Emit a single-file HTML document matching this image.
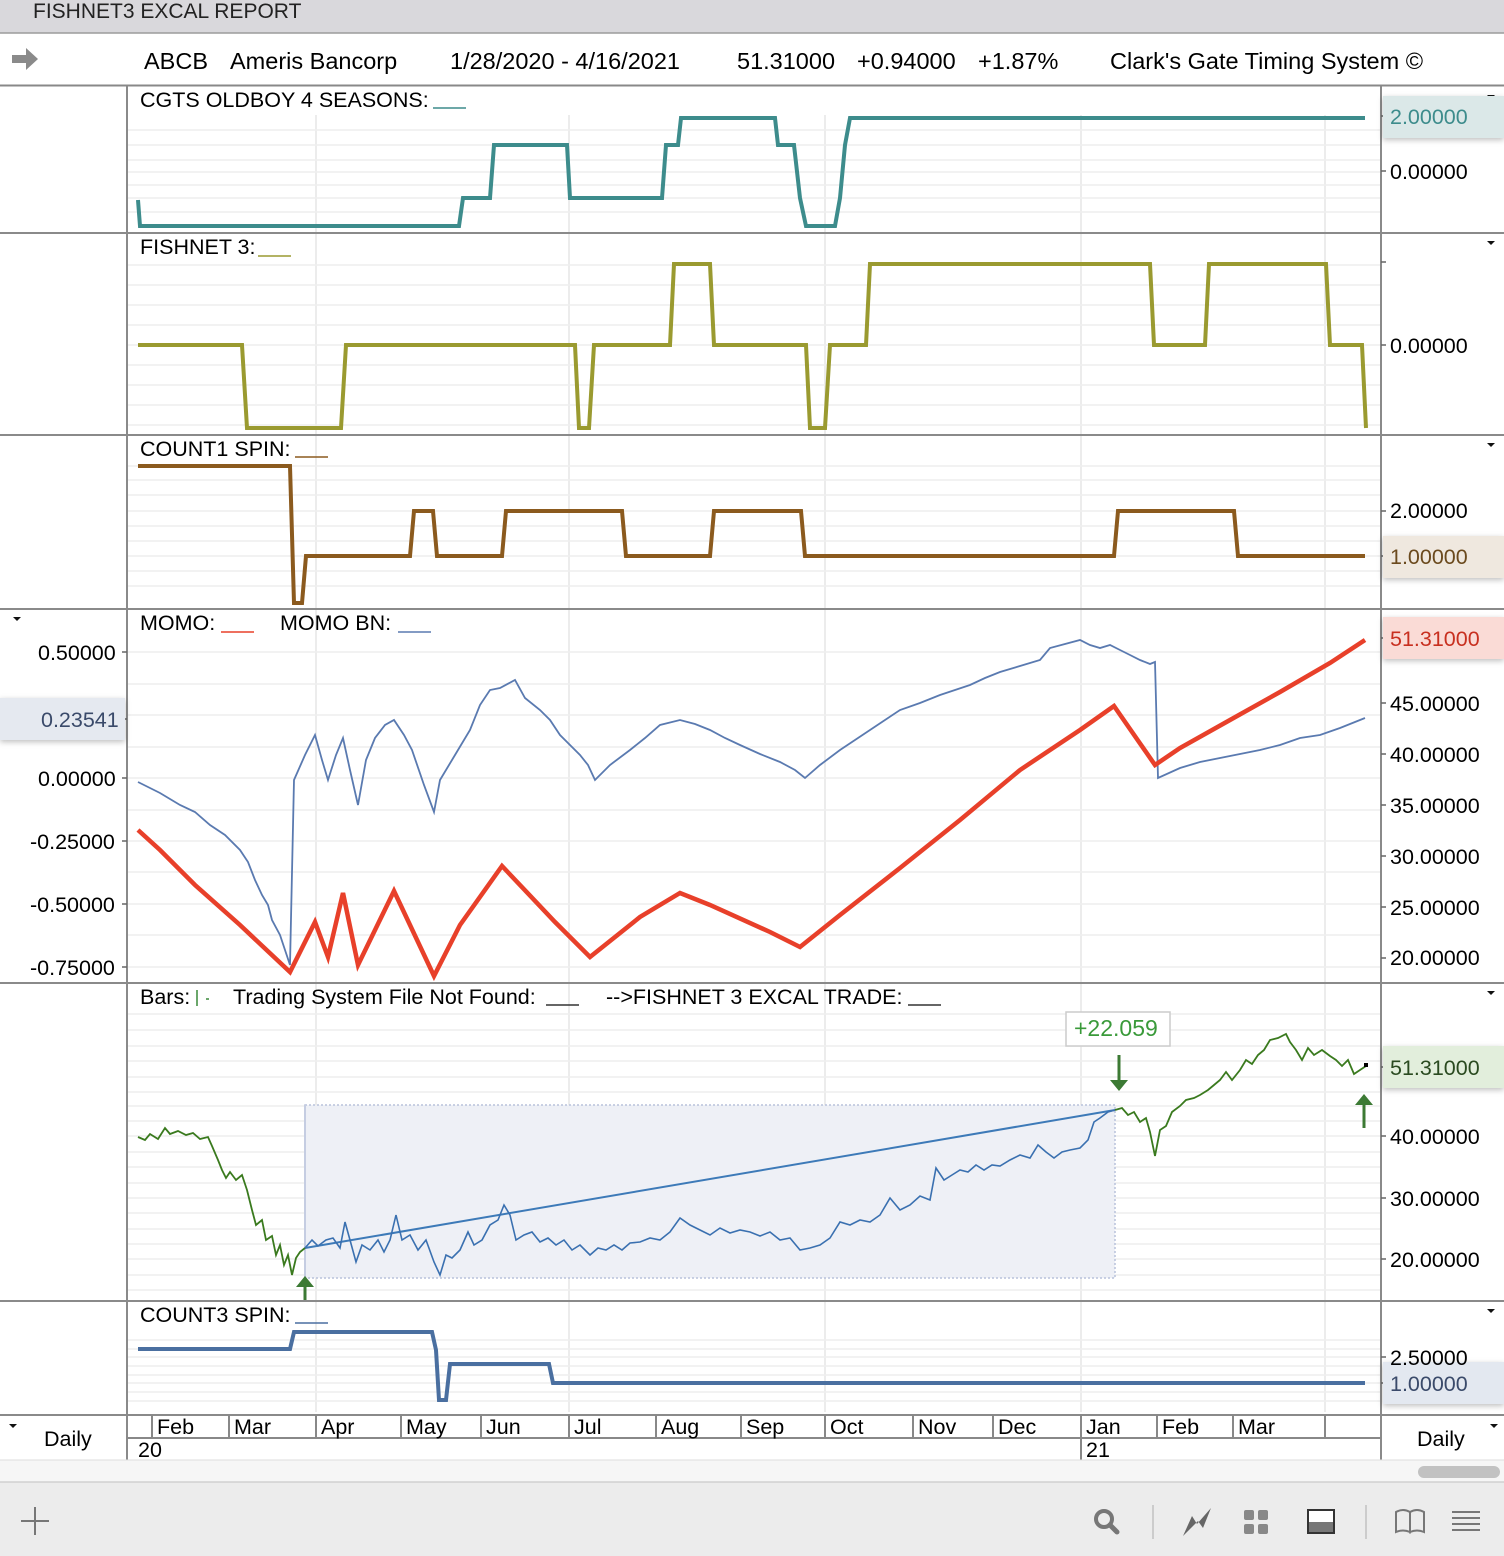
<!DOCTYPE html>
<html><head><meta charset="utf-8"><style>
html,body{margin:0;padding:0;background:#fff;}
svg{display:block;font-family:"Liberation Sans",Arial,sans-serif;}
</style></head><body>
<svg width="1504" height="1556" viewBox="0 0 1504 1556" xmlns="http://www.w3.org/2000/svg">
<defs><filter id="sh" x="-10%" y="-30%" width="120%" height="160%"><feDropShadow dx="0" dy="2" stdDeviation="3" flood-color="#000" flood-opacity="0.25"/></filter></defs>
<rect x="0" y="0" width="1504" height="33" fill="#d9d8dc"/>
<line x1="0" y1="33" x2="1504" y2="33" stroke="#9c9c9c" stroke-width="1.5"/>
<text x="33" y="18" font-size="21" fill="#222">FISHNET3 EXCAL REPORT</text>
<path d="M12 55h14v-7l12 11-12 11v-7H12z" fill="#8a8a8a"/>
<g font-size="23.5" fill="#000">
<text x="144" y="69">ABCB</text><text x="230" y="69">Ameris Bancorp</text>
<text x="450" y="69">1/28/2020 - 4/16/2021</text>
<text x="737" y="69">51.31000</text><text x="857" y="69">+0.94000</text><text x="978" y="69">+1.87%</text>
<text x="1110" y="69">Clark's Gate Timing System ©</text></g>
<line x1="0" y1="85.5" x2="1504" y2="85.5" stroke="#888" stroke-width="2"/>

<g stroke="#ececec" stroke-width="2">
<path d="M316 115V1412M569 115V1412M825 115V1412M1081 115V1412M1325 115V1412"/>
</g>
<g stroke="#eeeeee" stroke-width="1.5">
<path d="M128 130H1381M128 145H1381M128 160H1381M128 172H1381M128 185H1381M128 198H1381M128 212H1381"/>
<path d="M128 265H1381M128 285H1381M128 305H1381M128 325H1381M128 345H1381M128 365H1381M128 385H1381M128 405H1381M128 425H1381"/>
<path d="M128 466H1381M128 480H1381M128 495H1381M128 511H1381M128 526H1381M128 541H1381M128 556H1381M128 571H1381M128 586H1381"/>
<path d="M128 652H1381M128 684H1381M128 715H1381M128 747H1381M128 778H1381M128 810H1381M128 841H1381M128 872H1381M128 904H1381M128 935H1381M128 967H1381"/>
<path d="M128 1014H1381M128 1030H1381M128 1046H1381M128 1061H1381M128 1077H1381M128 1092H1381M128 1106H1381M128 1121H1381M128 1136H1381M128 1152H1381M128 1167H1381M128 1183H1381M128 1198H1381M128 1213H1381M128 1229H1381M128 1244H1381M128 1259H1381M128 1275H1381M128 1290H1381"/>
<path d="M128 1340H1381M128 1349H1381M128 1357H1381M128 1366H1381M128 1375H1381M128 1383H1381M128 1392H1381M128 1401H1381"/>
</g>

<g stroke="#8a8a8a" stroke-width="2">
<path d="M0 233H1504M0 435H1504M0 609H1504M0 983H1504M0 1301H1504M0 1415H1504"/>
<path d="M127 86V1460M1381 86V1460"/>
</g>

<g font-size="21.5" fill="#000">
<text x="140" y="107">CGTS OLDBOY 4 SEASONS:</text>
<text x="140" y="254">FISHNET 3:</text>
<text x="140" y="456">COUNT1 SPIN:</text>
<text x="140" y="630">MOMO:</text><text x="280" y="630">MOMO BN:</text>
<text x="140" y="1004">Bars:</text><text x="233" y="1004">Trading System File Not Found:</text><text x="606" y="1004">--&gt;FISHNET 3 EXCAL TRADE:</text>
<text x="140" y="1322">COUNT3 SPIN:</text>
</g>
<g stroke-width="1.5">
<path d="M433 108h33" stroke="#3d8c8c"/><path d="M258 256h33" stroke="#9a9a30"/>
<path d="M295 457h33" stroke="#8b5a1e"/><path d="M221 632h33" stroke="#e8402a"/>
<path d="M398 632h33" stroke="#5a7ab0"/><path d="M546 1005h33" stroke="#333"/><path d="M908 1005h33" stroke="#333"/>
<path d="M295 1323h33" stroke="#4a6fa0"/><path d="M197 990v16M206 999h3" stroke="#3a8a3a"/>
</g>

<g fill="#111">
<path d="M1487 95h8l-4 4z M1487 241h8l-4 4z M1487 443h8l-4 4z M1487 617h8l-4 4z M13 617h8l-4 4z M1487 991h8l-4 4z M1487 1309h8l-4 4z M9 1424h8l-4 4z M1490 1424h8l-4 4z"/>
</g>

<polyline fill="none" stroke="#3d8c8c" stroke-width="4" points="138,200 140,226 459,226 463,198 490,198 494,145 567,145 570,198 662,198 666,145 678,145 681,118 775,118 778,145 794,145 800,198 806,226 835,226 840,198 845,145 850,118 1365,118"/>
<polyline fill="none" stroke="#9a9a30" stroke-width="4" points="138,345 242,345 247,428 341,428 346,345 575,345 579,428 589,428 594,345 670,345 674,264 710,264 714,345 806,345 810,428 825,428 830,345 866,345 870,264 1150,264 1154,345 1205,345 1209,264 1326,264 1330,345 1362,345 1366,428"/>
<polyline fill="none" stroke="#8b5a1e" stroke-width="4" points="138,466 290,466 294,603 302,603 306,556 410,556 414,511 433,511 437,556 502,556 506,511 622,511 626,556 710,556 714,511 801,511 805,556 1114,556 1118,511 1234,511 1238,556 1365,556"/>
<polyline fill="none" stroke="#5a7ab0" stroke-width="1.8" points="138,782 160,793 180,805 195,812 210,825 225,835 240,850 248,862 255,880 262,895 268,905 272,920 280,935 285,950 290,965 294,780 305,755 315,735 322,760 328,780 336,755 343,738 350,770 358,805 366,760 375,738 385,725 394,720 404,735 412,750 424,785 434,812 440,780 455,755 470,730 480,705 490,690 500,688 515,680 525,698 540,710 550,720 560,735 570,745 580,755 588,765 595,780 610,765 630,750 645,738 660,725 680,720 695,724 710,730 725,738 740,745 760,754 780,762 795,770 805,778 820,765 840,750 855,740 870,730 885,720 900,710 920,703 940,695 955,690 970,685 985,678 1000,672 1020,666 1040,660 1050,648 1065,644 1080,640 1090,645 1100,648 1110,645 1120,650 1130,655 1140,660 1150,664 1155,662 1158,778 1180,768 1200,762 1230,756 1260,750 1280,745 1300,738 1320,735 1340,728 1355,722 1365,718"/>
<polyline fill="none" stroke="#e8402a" stroke-width="4.5" points="138,830 160,850 195,885 240,925 290,972 315,922 328,957 343,893 358,965 394,891 434,976 460,925 502,866 555,922 590,957 640,917 680,893 710,905 770,932 800,947 840,915 900,868 960,820 1020,770 1080,730 1114,706 1155,765 1180,748 1230,720 1280,692 1330,663 1365,640"/>

<rect x="305" y="1105" width="810" height="173" fill="#eef0f6" stroke="#b8c2dc" stroke-width="1.5" stroke-dasharray="2,2"/>
<line x1="305" y1="1105" x2="305" y2="1278" stroke="#c5cde2" stroke-width="2"/>
<polyline fill="none" stroke="#3d7ab8" stroke-width="2" points="305,1248 1115,1110"/>
<polyline fill="none" stroke="#3a7a1e" stroke-width="1.8" points="138,1137 145,1140 150,1134 158,1139 165,1128 170,1134 178,1131 186,1135 193,1133 200,1139 208,1137 212,1146 218,1160 222,1170 226,1178 230,1172 236,1180 242,1175 247,1190 252,1210 256,1225 262,1220 266,1240 272,1236 276,1255 280,1245 284,1265 288,1255 292,1275 296,1258 300,1252 305,1248"/>
<polyline fill="none" stroke="#3a70b0" stroke-width="1.6" points="305,1248 312,1240 318,1246 326,1240 333,1238 340,1248 345,1222 350,1240 356,1262 362,1245 370,1250 378,1240 384,1252 390,1240 396,1215 402,1240 410,1235 418,1250 426,1240 434,1262 440,1275 446,1255 452,1258 460,1250 468,1232 474,1245 482,1240 490,1225 498,1220 504,1205 510,1215 516,1240 524,1235 532,1232 540,1242 548,1238 556,1245 564,1240 572,1250 580,1245 590,1255 598,1248 606,1250 614,1245 622,1250 630,1243 640,1242 650,1238 660,1240 670,1232 680,1218 690,1225 700,1230 710,1235 720,1228 730,1233 740,1230 750,1232 760,1236 770,1232 780,1240 790,1238 800,1250 810,1248 820,1245 830,1238 840,1222 850,1225 860,1220 870,1222 880,1215 890,1198 900,1210 910,1205 920,1196 930,1200 936,1168 944,1180 952,1175 960,1170 968,1172 976,1165 984,1170 992,1165 1000,1166 1010,1160 1020,1155 1030,1158 1038,1145 1046,1152 1054,1158 1062,1152 1070,1150 1080,1148 1088,1140 1094,1122 1100,1118 1108,1112 1115,1110"/>
<polyline fill="none" stroke="#3a7a1e" stroke-width="1.8" points="1115,1110 1122,1108 1128,1115 1134,1112 1140,1122 1146,1118 1150,1132 1155,1156 1160,1130 1166,1126 1172,1112 1180,1106 1186,1100 1194,1098 1200,1095 1208,1090 1214,1085 1220,1080 1226,1072 1232,1080 1240,1070 1246,1060 1252,1064 1258,1055 1264,1050 1270,1040 1278,1038 1286,1034 1290,1042 1296,1050 1302,1060 1308,1048 1314,1055 1322,1050 1330,1056 1336,1060 1342,1066 1348,1060 1354,1074 1360,1070 1366,1066"/>
<rect x="1364" y="1063" width="4" height="4" fill="#000"/>
<g fill="#3c7a34" stroke="#3c7a34">
<path d="M305 1300V1286" stroke-width="3"/><path d="M296 1287l9-11 9 11z" stroke="none"/>
<path d="M1119 1055V1080" stroke-width="3"/><path d="M1110 1080l9 11 9-11z" stroke="none"/>
<path d="M1364 1128V1104" stroke-width="3"/><path d="M1355 1105l9-11 9 11z" stroke="none"/>
</g>
<rect x="1066" y="1012" width="104" height="34" fill="#fff" stroke="#ccc" stroke-width="1.5"/>
<text x="1074" y="1036" font-size="23" fill="#3a9a3a">+22.059</text>

<polyline fill="none" stroke="#4a6fa0" stroke-width="4" points="138,1349 290,1349 294,1332 432,1332 436,1350 439,1400 446,1400 450,1364 549,1364 553,1383 1365,1383"/>

<g stroke="#666" stroke-width="1.5">
<path d="M1381 116h5M1381 171h5M1381 262h5M1381 345h5M1381 511h5M1381 556h5M1381 638h5M1381 703h5M1381 754h5M1381 805h5M1381 856h5M1381 907h5M1381 958h5M1381 1067h5M1381 1136h5M1381 1198h5M1381 1259h5M1381 1357h5M1381 1383h5"/>
<path d="M122 652h5M122 778h5M122 841h5M122 904h5M122 967h5M122 719h5"/>
</g>
<g filter="url(#sh)">
<rect x="1383" y="96" width="121" height="42" fill="#dbe8e8"/>
<rect x="1383" y="536" width="121" height="42" fill="#efe8df"/>
<rect x="1383" y="617" width="121" height="42" fill="#fadbd6"/>
<rect x="1383" y="1046" width="121" height="42" fill="#e2eedc"/>
<rect x="1383" y="1362" width="121" height="42" fill="#e3e8f0"/>
<rect x="0" y="698" width="125" height="42" fill="#e5e9f0"/>
</g>
<g font-size="21.5" fill="#000">
<text x="1390" y="124" fill="#3d8c8c">2.00000</text>
<text x="1390" y="179">0.00000</text>
<text x="1390" y="353">0.00000</text>
<text x="1390" y="518">2.00000</text>
<text x="1390" y="564" fill="#6b4a1e">1.00000</text>
<text x="1390" y="646" fill="#c83020">51.31000</text>
<text x="1390" y="711">45.00000</text>
<text x="1390" y="762">40.00000</text>
<text x="1390" y="813">35.00000</text>
<text x="1390" y="864">30.00000</text>
<text x="1390" y="915">25.00000</text>
<text x="1390" y="965">20.00000</text>
<text x="1390" y="1075" fill="#2a4a20">51.31000</text>
<text x="1390" y="1144">40.00000</text>
<text x="1390" y="1206">30.00000</text>
<text x="1390" y="1267">20.00000</text>
<text x="1390" y="1365">2.50000</text>
<text x="1390" y="1391" fill="#3a4a6a">1.00000</text>
<text x="38" y="660">0.50000</text>
<text x="41" y="727" fill="#3a4a6a">0.23541</text>
<text x="38" y="786">0.00000</text>
<text x="30" y="849">-0.25000</text>
<text x="30" y="912">-0.50000</text>
<text x="30" y="975">-0.75000</text>
</g>

<line x1="127" y1="1438" x2="1381" y2="1438" stroke="#888" stroke-width="2"/>
<g stroke="#888" stroke-width="2">
<path d="M152 1415V1438M229 1415V1438M316 1415V1438M401 1415V1438M481 1415V1438M569 1415V1438M656 1415V1438M741 1415V1438M825 1415V1438M913 1415V1438M993 1415V1438M1081 1415V1460M1157 1415V1438M1233 1415V1438M1325 1415V1438"/>
</g>
<g font-size="21.5" fill="#000">
<text x="157" y="1434">Feb</text><text x="234" y="1434">Mar</text><text x="321" y="1434">Apr</text><text x="406" y="1434">May</text><text x="486" y="1434">Jun</text><text x="574" y="1434">Jul</text><text x="661" y="1434">Aug</text><text x="746" y="1434">Sep</text><text x="830" y="1434">Oct</text><text x="918" y="1434">Nov</text><text x="998" y="1434">Dec</text><text x="1086" y="1434">Jan</text><text x="1162" y="1434">Feb</text><text x="1238" y="1434">Mar</text>
<text x="138" y="1457">20</text><text x="1086" y="1457">21</text>
<text x="44" y="1446">Daily</text><text x="1417" y="1446">Daily</text>
</g>

<rect x="0" y="1460" width="1504" height="22" fill="#f6f6f6"/>
<line x1="0" y1="1460" x2="1504" y2="1460" stroke="#ddd"/>
<rect x="1418" y="1466" width="82" height="12" rx="6" fill="#c2c2c2"/>
<rect x="0" y="1482" width="1504" height="74" fill="#ececec"/>
<line x1="0" y1="1482" x2="1504" y2="1482" stroke="#d0d0d0" stroke-width="1.5"/>
<path d="M35 1507v28M21 1521h28" stroke="#777" stroke-width="2"/>
<circle cx="1104" cy="1519" r="8" fill="none" stroke="#777" stroke-width="4"/>
<path d="M1110 1525l7 7" stroke="#777" stroke-width="5" stroke-linecap="round"/>
<path d="M1153 1505v34M1366 1505v34" stroke="#ccc" stroke-width="2"/>
<path d="M1183 1536l9-20 5 8 14-16-8 20-5-7z" fill="#666"/>
<g fill="#888"><rect x="1244" y="1510" width="10" height="10" rx="2"/><rect x="1258" y="1510" width="10" height="10" rx="2"/><rect x="1244" y="1524" width="10" height="10" rx="2"/><rect x="1258" y="1524" width="10" height="10" rx="2"/></g>
<rect x="1308" y="1510" width="26" height="23" fill="#fff" stroke="#333" stroke-width="2"/>
<rect x="1309" y="1522" width="24" height="10" fill="#777"/>
<path d="M1396 1512q7-4 14 0v20q-7-3-14 0zM1410 1512q7-4 14 0v20q-7-3-14 0z" fill="none" stroke="#777" stroke-width="2"/>
<path d="M1452 1512h28M1452 1518h28M1452 1524h28M1452 1530h28" stroke="#777" stroke-width="2"/>
</svg>
</body></html>
